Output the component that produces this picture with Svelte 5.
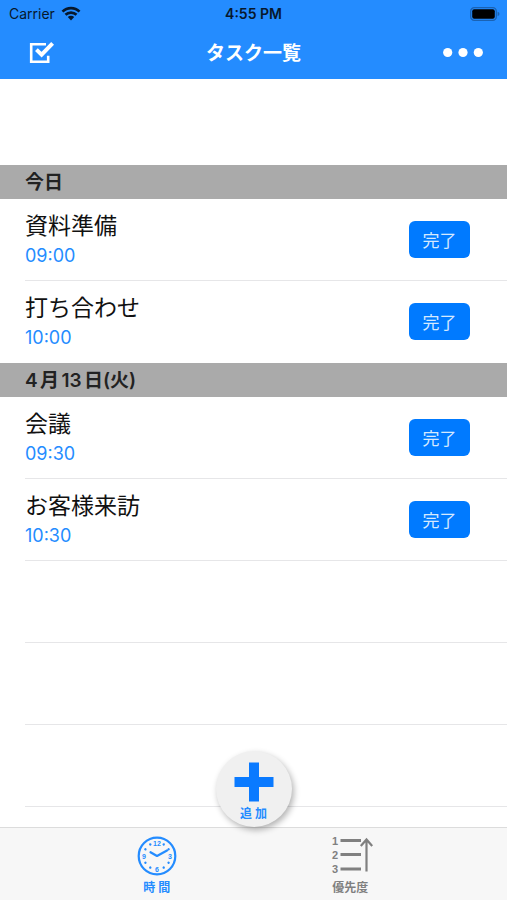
<script lang="ts">
interface Task { id: number; title: string; time: string; }
interface Section { label: string; tasks: Task[]; }

let sections = $state<Section[]>([
  {
    label: '今日',
    tasks: [
      { id: 1, title: '資料準備', time: '09:00' },
      { id: 2, title: '打ち合わせ', time: '10:00' },
    ],
  },
  {
    label: '4月13日(火)',
    tasks: [
      { id: 3, title: '会議', time: '09:30' },
      { id: 4, title: 'お客様来訪', time: '10:30' },
    ],
  },
]);
let tab = $state<'time' | 'priority'>('time');

const emptyRows = [0, 1, 2];
const dots = [30, 60, 120, 150, 210, 240, 300, 330];

function complete(section: Section, id: number) {
  section.tasks = section.tasks.filter((t) => t.id !== id);
}
</script>

<div class="app">
  <header>
    <div class="status">
      <span class="carrier">
        Carrier
        <svg width="20" height="15" viewBox="0 0 20 15" aria-hidden="true">
          <g fill="none" stroke="#07182c" stroke-width="2.7">
            <path d="M1.5 5.6a12 12 0 0 1 17 0" />
            <path d="M4.5 8.8a7.8 7.8 0 0 1 11 0" />
          </g>
          <path d="M6.8 11a4.6 4.6 0 0 1 6.4 0L10 14.4z" fill="#07182c" />
        </svg>
      </span>
      <span class="clock">4:55 PM</span>
      <span class="battery">
        <svg width="30" height="14" viewBox="0 0 30 14" aria-hidden="true">
          <rect x=".7" y=".7" width="25.6" height="12.6" rx="3.6" fill="none" stroke="#1a62b3" stroke-width="1.3" />
          <rect x="2.2" y="2.2" width="22.6" height="9.6" rx="2" fill="#000" />
          <path d="M27.6 4.8q1.9.6 1.9 2.2t-1.9 2.2z" fill="#1a62b3" />
        </svg>
      </span>
    </div>
    <div class="nav">
      <button type="button" class="icon-btn check" aria-label="完了したタスク">
        <svg width="26" height="22" viewBox="0 0 26 22" fill="none" stroke="#fff" aria-hidden="true">
          <path d="M17 2.2H2.2v17.6h17v-6" stroke-width="2.6" />
          <path d="M7.4 7.6l5.2 5L23.6 1.4" stroke-width="4" />
        </svg>
      </button>
      <h1>タスク一覧</h1>
      <button type="button" class="icon-btn menu" aria-label="メニュー">
        <svg width="40" height="10" viewBox="0 0 40 10" fill="#fff" aria-hidden="true">
          <circle cx="4.7" cy="4.5" r="4.6" />
          <circle cx="20" cy="4.5" r="4.6" />
          <circle cx="35.3" cy="4.5" r="4.6" />
        </svg>
      </button>
    </div>
  </header>

  <main>
    {#each sections as section (section.label)}
      <section>
        <h2>{section.label}</h2>
        <ul>
          {#each section.tasks as task (task.id)}
            <li>
              <div class="info">
                <span class="title">{task.title}</span>
                <time>{task.time}</time>
              </div>
              <button type="button" class="done" onclick={() => complete(section, task.id)}>完了</button>
            </li>
          {/each}
        </ul>
      </section>
    {/each}
    {#each emptyRows as row (row)}
      <div class="empty"></div>
    {/each}
  </main>

  <footer>
    <button type="button" class="add">
      <svg width="40" height="40" viewBox="0 0 40 40" aria-hidden="true">
        <path d="M15 .5h10V15h14.500v10H25v14.500H15V25H.5V15H15z" fill="#0a7aff" />
      </svg>
      <span>追 加</span>
    </button>
    <button type="button" class="tab" class:active={tab === 'time'} onclick={() => (tab = 'time')}>
      <svg width="40" height="40" viewBox="0 0 40 40" aria-hidden="true">
        <circle cx="20" cy="20" r="18.3" fill="none" stroke="currentColor" stroke-width="2.2" />
        {#each dots as angle (angle)}
          <circle cx="20" cy="6.6" r="1.2" fill="currentColor" transform={`rotate(${angle} 20 20)`} />
        {/each}
        <path d="M13.5 16.2L20 20l10-5.5" fill="none" stroke="currentColor" stroke-width="2.2" stroke-linejoin="round" stroke-linecap="round" />
        <g class="numerals" text-anchor="middle">
          <text x="20" y="10">12</text>
          <text x="33" y="23">3</text>
          <text x="20" y="36">6</text>
          <text x="7" y="23">9</text>
        </g>
      </svg>
      <span>時 間</span>
    </button>
    <button type="button" class="tab" class:active={tab === 'priority'} onclick={() => (tab = 'priority')}>
      <svg width="44" height="40" viewBox="0 0 44 40" aria-hidden="true">
        <g class="ranks">
          <text x="4" y="9">1</text>
          <text x="4" y="23">2</text>
          <text x="4" y="37">3</text>
        </g>
        <path d="M12.5 4.5H33M12.5 18.5H33M12.5 33H33" stroke="currentColor" stroke-width="2.8" />
        <path d="M38.5 35.5V4M32.8 10l5.7-6.5 5.7 6.5" fill="none" stroke="currentColor" stroke-width="2.2" />
      </svg>
      <span>優先度</span>
    </button>
  </footer>
</div>

<style>
:global(body) { margin: 0; }
.app { display: flex; flex-direction: column; height: 100vh; background: #fff; color: #111; font-family: Inter, "Noto Sans CJK JP", sans-serif; }
button { padding: 0; border: 0; background: transparent; font-family: inherit; cursor: pointer; }
svg { display: block; overflow: visible; }

header { background: #248cff; flex: none; }
.status { display: flex; align-items: center; height: 27px; padding: 0 7px; color: #07182c; font-size: 14px; }
.carrier { display: flex; flex: 1; align-items: center; gap: 6px; text-indent: 2px; }
.clock { font-weight: 600; }
.battery { display: flex; flex: 1; justify-content: flex-end; }
.nav { display: flex; align-items: center; height: 52px; padding: 0 24px; }
.icon-btn { display: flex; flex: 1; align-items: center; height: 44px; }
.check svg { margin-left: 5px; }
.menu { justify-content: flex-end; }
h1 { margin: 0; padding-top: 2px; color: #fff; font-size: 19px; font-weight: 700; line-height: 28px; }

main { flex: 1; min-height: 0; overflow: hidden; padding-top: 86px; }
h2 { margin: 0; padding: 2px 25px 0; background: #aaa; color: #222; font-size: 19px; font-weight: 600; line-height: 32px; text-autospace: normal; }
ul { margin: 0; padding: 0; list-style: none; }
li, .empty { box-sizing: border-box; height: 82px; margin-left: 25px; border-bottom: 1px solid #e6e6e8; }
li { display: flex; align-items: center; justify-content: space-between; padding-right: 37px; }
section:first-child li:last-child { border-bottom-color: transparent; }
.info { display: flex; flex-direction: column; }
.title { font-size: 23px; line-height: 32px; }
time { color: #248cff; font-size: 18px; line-height: 28px; }
.done { width: 61px; height: 37px; border-radius: 6px; background: #007aff; color: #d5e9ff; font-size: 17px; }

footer { position: relative; display: flex; flex: none; box-sizing: border-box; height: 73px; padding: 0 60px; border-top: 1px solid #dcdcdc; background: #f7f7f7; }
.tab { display: flex; flex: 1; flex-direction: column; align-items: center; padding-top: 8px; color: #808080; font-size: 12px; font-weight: 700; line-height: 24px; }
.tab.active { color: #248cff; }
.numerals { fill: currentColor; font-family: "Liberation Sans", sans-serif; font-size: 7px; font-weight: 700; }
.ranks { fill: currentColor; font-family: "Liberation Sans", sans-serif; font-size: 11px; font-weight: 700; }
.add { position: absolute; top: -77px; left: 50%; display: flex; flex-direction: column; align-items: center; box-sizing: border-box; width: 76px; height: 76px; margin-left: -38px; padding-top: 11px; border-radius: 50%; background: #f0f0f0; box-shadow: 2px 3px 6px rgba(0, 0, 0, 0.3); color: #248cff; font-size: 12px; font-weight: 700; line-height: 24px; }
</style>
